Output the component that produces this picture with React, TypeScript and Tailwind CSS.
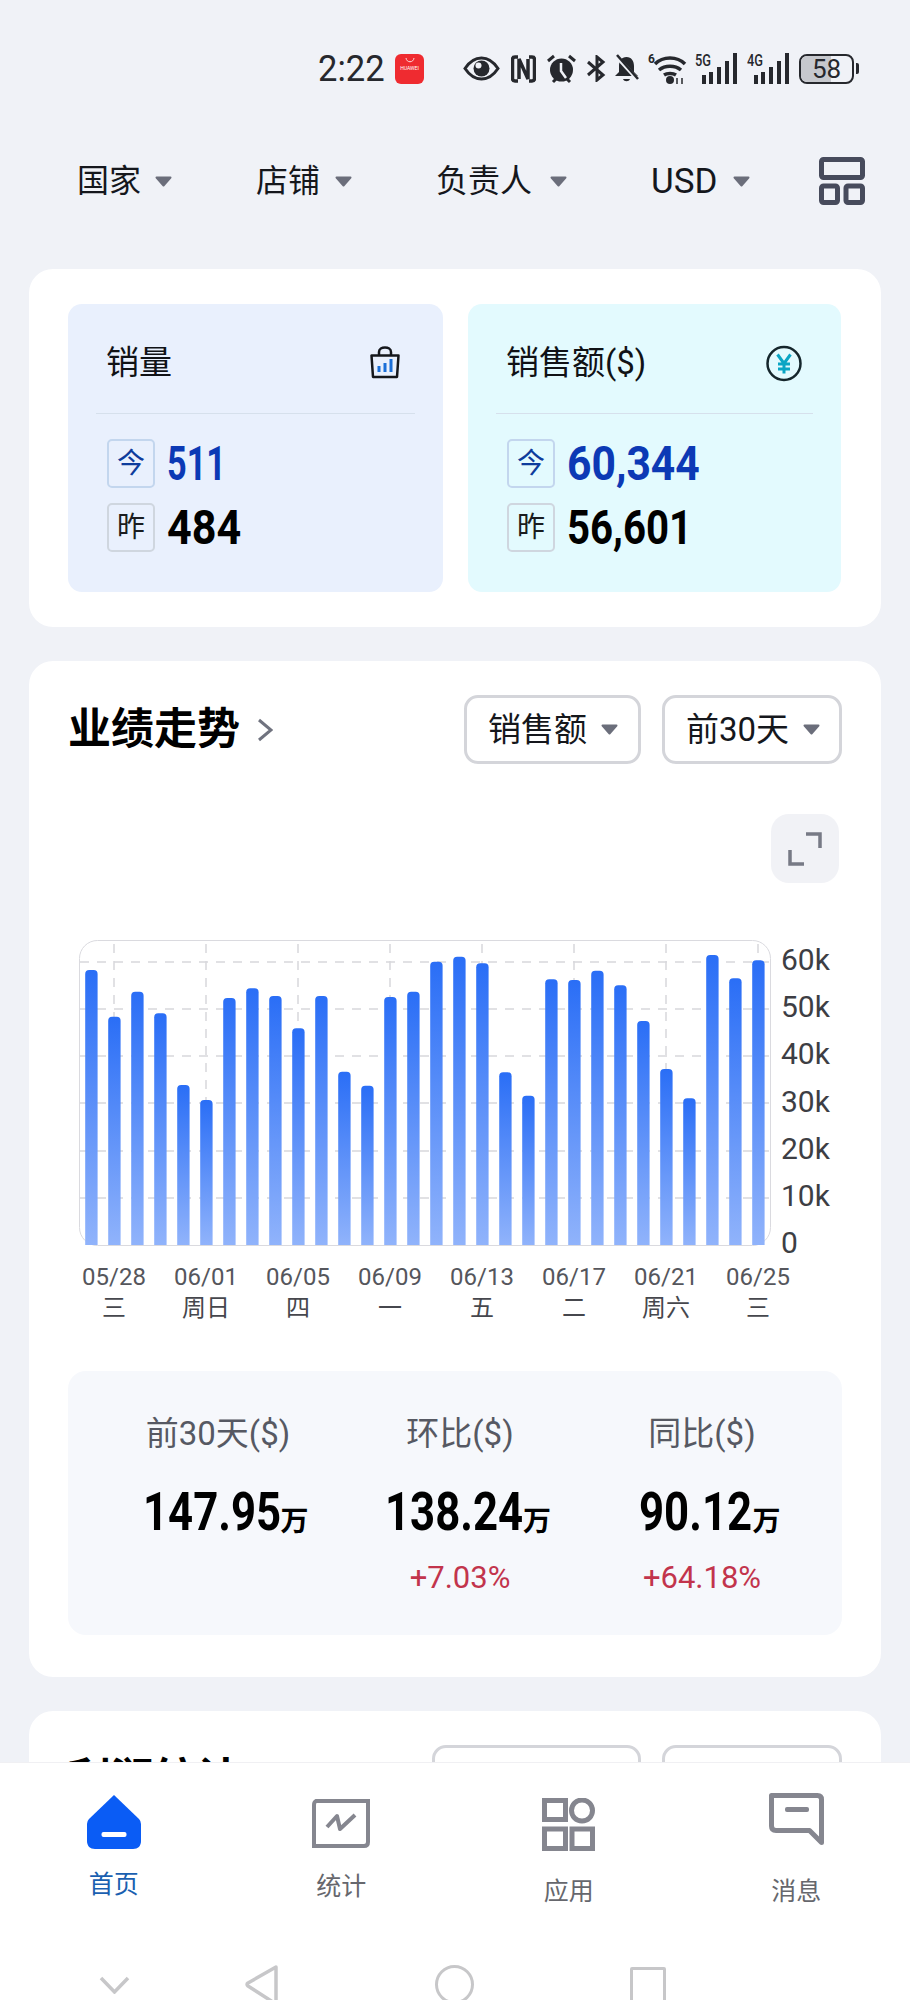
import type { ReactNode } from "react";

const CJK = "font-['Roboto','Noto_Sans_CJK_SC',sans-serif]";

const barTops = [
  150, 290, 215, 280, 495, 540, 234, 205, 228, 325, 228, 455, 497, 231, 215, 125, 110, 130, 457, 527, 178, 180, 152, 196,
  303, 447, 535, 105, 175, 121,
];

const xLabels = [
  ["05/28", "三"],
  ["06/01", "周日"],
  ["06/05", "四"],
  ["06/09", "一"],
  ["06/13", "五"],
  ["06/17", "二"],
  ["06/21", "周六"],
  ["06/25", "三"],
];

function Caret({ className = "" }: { className?: string }) {
  return (
    <svg width="17" height="11" viewBox="0 0 17 11" className={`shrink-0 ${className}`}>
      <path d="M1.500 1.500h14L8.500 9.500z" fill="#6b6e7b" stroke="#6b6e7b" strokeWidth="2" strokeLinejoin="round" />
    </svg>
  );
}

function StatusBar() {
  return (
    <div className="mt-[52px] flex h-[33px] items-center pl-[318px] text-[#26282d]">
      <span className="mr-[9px] w-[68px] origin-left scale-x-[0.96] text-[36px] leading-none">2:22</span>
      <div className="relative mr-[39px] flex h-[30px] w-[29px] flex-col items-center overflow-hidden rounded-[6px] bg-[#ef2b30] pt-[3px]">
        <svg width="10" height="6" viewBox="0 0 10 6">
          <path d="M1 1c.5 5 7.500 5 8 0" fill="none" stroke="#ffd9d9" strokeWidth="1" />
        </svg>
        <span className="mt-[3px] text-[5px] leading-none text-white">HUAWEI</span>
      </div>
      <svg width="37" height="25" viewBox="0 0 37 25" className="mr-[11px]">
        <path d="M2 12.500C7 5 12 2 18.500 2S30 5 35 12.500C30 20 25 23 18.500 23S7 20 2 12.500z" fill="none" stroke="#26282d" strokeWidth="3" />
        <circle cx="18.500" cy="12.500" r="8" fill="#26282d" />
        <circle cx="15.500" cy="9.500" r="3" fill="#f0f2f7" />
      </svg>
      <svg width="25" height="28" viewBox="0 0 25 28" className="mr-[11px]" fill="none">
        <path d="M7 2H4q-2.500 0-2.500 2.500v19Q1.500 26 4 26h3M18 2h3q2.500 0 2.500 2.500v19Q23.500 26 21 26h-3" stroke="#26282d" strokeWidth="3.500" />
        <path d="M8 24V4l9 20V4" stroke="#26282d" strokeWidth="3.500" />
      </svg>
      <svg width="29" height="30" viewBox="0 0 29 30" className="mr-[9px]">
        <circle cx="14.500" cy="16" r="11.500" fill="#26282d" />
        <path d="M1 7l6-5M28 7l-6-5M6 28l3-3M23 28l-3-3" stroke="#26282d" strokeWidth="3" />
        <path d="M14 9v8l5 7" fill="none" stroke="#f0f2f7" strokeWidth="2.500" />
      </svg>
      <svg width="22" height="27" viewBox="0 0 22 27" className="mr-[7px]">
        <path d="M3 7l15 13-6 5V2l6 5L3 20" fill="none" stroke="#26282d" strokeWidth="3" />
      </svg>
      <svg width="25" height="29" viewBox="0 0 25 29" className="mr-[9px]">
        <path d="M12.500 3c5 0 7.500 4 7.500 9v6l4 4H1l4-4v-6c0-5 2.500-9 7.500-9z" fill="#26282d" />
        <path d="M9 25c1 3 6 3 7 0z" fill="#26282d" />
        <path d="M2 2l21 23" stroke="#f0f2f7" strokeWidth="4" />
        <path d="M3 1l21 24" stroke="#26282d" strokeWidth="2.500" />
      </svg>
      <div className="relative mr-[8px] h-[32px] w-[40px]">
        <span className="absolute left-0 top-0 text-[12px] font-bold leading-none">6</span>
        <svg width="40" height="32" viewBox="0 0 40 32" className="absolute inset-0">
          <path d="M7 11c8-8 22-8 30 0M11 17c6-5 16-5 22 0M16 22c3-2 9-2 12 0" fill="none" stroke="#26282d" strokeWidth="3.500" />
          <circle cx="22" cy="27" r="4" fill="#26282d" />
          <path d="M29 25v6M34 25v6" stroke="#26282d" strokeWidth="1.500" />
        </svg>
      </div>
      <Signal label="5G" className="mr-[11px]" />
      <Signal label="4G" className="mr-[10px]" />
      <div className="relative flex h-[30px] w-[55px] items-center justify-center overflow-hidden rounded-[8px] border-[2.5px] border-[#26282d]">
        <div className="absolute inset-y-0 left-0 w-[58%] bg-[#c6c8cd]" />
        <span className="relative text-[26px] leading-none">58</span>
      </div>
      <div className="ml-[2px] h-[11px] w-[3px] rounded-r-[2px] bg-[#26282d]" />
    </div>
  );
}

function Signal({ label, className }: { label: string; className: string }) {
  return (
    <div className={`relative h-[31px] w-[41px] ${className}`}>
      <span className="absolute -left-px top-0 origin-top-left scale-x-[0.8] text-[16px] font-medium leading-none">{label}</span>
      <svg width="41" height="31" viewBox="0 0 41 31" className="absolute inset-0">
        <path d="M8 22v9M15 19v12M23 14v17M31 8v23M39 0v31" stroke="#26282d" strokeWidth="4" />
      </svg>
    </div>
  );
}

function FilterRow() {
  const items = [
    { label: "国家", text: "mr-[14px] text-[32px]" },
    { label: "店铺", text: "mr-[15px] text-[32px]" },
    { label: "负责人", text: "mr-[18px] text-[32px]" },
    { label: "USD", text: "mr-[15px] text-[35px]" },
  ];
  return (
    <div className="mt-[72px] flex h-[48px] items-center pl-[77px] pr-[45px] text-[#15171c]">
      <div className="flex items-center gap-[84px]">
        {items.map((item) => (
          <div key={item.label} className="flex shrink-0 items-center whitespace-nowrap">
            <span className={`leading-none ${item.text}`}>{item.label}</span>
            <Caret />
          </div>
        ))}
      </div>
      <svg width="46" height="48" viewBox="0 0 46 48" className="ml-auto shrink-0" fill="none" stroke="#474b5c" strokeWidth="5">
        <rect x="2.500" y="2.500" width="41" height="18" rx="2" />
        <rect x="2.500" y="29" width="16" height="16.500" rx="2" />
        <rect x="27" y="29" width="16.500" height="16.500" rx="2" />
      </svg>
    </div>
  );
}

function BagIcon() {
  return (
    <svg width="30" height="34" viewBox="0 0 30 34" fill="none">
      <path d="M9 11V7c0-6 12-6 12 0v4" stroke="#15171c" strokeWidth="2.500" />
      <path d="M1.500 10.500h27l-1.500 21.500h-24z" stroke="#15171c" strokeWidth="2.500" strokeLinejoin="round" />
      <path d="M9 21v6M15 18v9M21 14v13" stroke="#1b6fd8" strokeWidth="3" />
    </svg>
  );
}

function YenIcon() {
  return (
    <svg width="36" height="37" viewBox="0 0 36 37" fill="none">
      <circle cx="18" cy="18.500" r="16.500" stroke="#15262c" strokeWidth="2.500" />
      <path d="M11.500 9.500l6.500 9 6.500-9M18 18.500v10M12 19h12M12 24h12" stroke="#0aa5c4" strokeWidth="3" />
    </svg>
  );
}

function Badge({ kind, children }: { kind: "today" | "yesterday"; children: ReactNode }) {
  return (
    <div
      className={`flex h-[49px] w-[48px] shrink-0 items-center justify-center rounded-[5px] border-2 text-[28px] leading-none ${
        kind === "today" ? "border-[#c3d6ee] text-[#0e3c9c]" : "border-[#cfd6df] text-[#1a1c20]"
      }`}
    >
      {children}
    </div>
  );
}

function SummaryCard({
  title,
  icon,
  today,
  yesterday,
  todayScale,
  yesterdayScale,
  bg,
  iconRight,
}: {
  title: string;
  icon: ReactNode;
  today: string;
  yesterday: string;
  todayScale: string;
  yesterdayScale: string;
  bg: string;
  iconRight: string;
}) {
  return (
    <div className={`h-[288px] rounded-[14px] ${bg}`}>
      <div className={`flex h-[109px] items-start justify-between pl-[38px] pt-[37px] ${iconRight}`}>
        <span className="text-[33px] leading-[44px] text-[#101216]">{title}</span>
        <div className="mt-[4px]">{icon}</div>
      </div>
      <div className="mx-[28px] border-t border-[#d6e0ec]" />
      <div className="mt-[25px] flex flex-col gap-[15px] pl-[39px]">
        <div className="flex items-center gap-[12px]">
          <Badge kind="today">今</Badge>
          <span className={`origin-left text-[49px] font-bold leading-none text-[#0c39b5] ${todayScale}`}>{today}</span>
        </div>
        <div className="flex items-center gap-[12px]">
          <Badge kind="yesterday">昨</Badge>
          <span className={`origin-left text-[49px] font-bold leading-none text-black ${yesterdayScale}`}>{yesterday}</span>
        </div>
      </div>
    </div>
  );
}

function SelectButton({ label, widthClass, paddingClass }: { label: string; widthClass: string; paddingClass: string }) {
  return (
    <div className={`flex h-[69px] items-center rounded-[14px] border-[3px] border-[#d4d5da] bg-white ${widthClass} ${paddingClass}`}>
      <span className="mr-[14px] whitespace-nowrap text-[33px] leading-none text-[#15171c]">{label}</span>
      <Caret />
    </div>
  );
}

function BarChart() {
  const plotBottom = 305;
  return (
    <svg width="700" height="310" viewBox="0 0 700 310" className="block">
      <defs>
        <linearGradient id="barFill" x1="0" y1="0" x2="0" y2="1">
          <stop offset="0" stopColor="#2a6ef6" />
          <stop offset="1" stopColor="#90b3fb" />
        </linearGradient>
      </defs>
      <rect x="0.500" y="0.500" width="691" height="305" rx="18" fill="#fff" stroke="#dadadf" />
      {[22, 69, 116, 163, 211, 258].map((y) => (
        <line key={y} x1="1" x2="691" y1={y} y2={y} stroke="#d8d8dc" strokeWidth="1.500" strokeDasharray="9 8" />
      ))}
      {[35, 127, 219, 311, 403, 495, 587, 679].map((x) => (
        <line key={x} x1={x} x2={x} y1="4" y2="305" stroke="#d8d8dc" strokeWidth="1.500" strokeDasharray="9 8" />
      ))}
      {barTops.map((top, i) => {
        const h = (975 - top) / 3;
        const x = 6.2 + 23 * i;
        return (
          <path
            key={i}
            d={`M${x} ${plotBottom}V${plotBottom - h + 4}a4 4 0 0 1 4-4h4.400a4 4 0 0 1 4 4V${plotBottom}z`}
            fill="url(#barFill)"
          />
        );
      })}
    </svg>
  );
}

function StatColumn({ label, value, widthClass, delta }: { label: string; value: string; widthClass: string; delta?: string }) {
  return (
    <div className="flex flex-col items-center">
      <span className="whitespace-nowrap text-[33px] leading-[44px] text-[#565963]">{label}</span>
      <div className="ml-[16px] mt-[29px] flex items-end">
        <span className={`origin-left scale-x-[0.81] text-[54px] font-bold leading-[54px] text-black ${widthClass}`}>{value}</span>
        <span className="mb-[3px] ml-[2px] text-[28px] font-bold leading-none text-black">万</span>
      </div>
      {delta ? <span className="mt-[19px] text-[31px] leading-[40px] text-[#c2344c]">{delta}</span> : null}
    </div>
  );
}

function TrendCard() {
  return (
    <section className="mt-[34px] h-[1016px] rounded-[24px] bg-white px-[39px] pt-[34px]">
      <div className="flex h-[69px] items-center">
        <h2 className="text-[43px] font-bold leading-none text-black">业绩走势</h2>
        <svg width="16" height="24" viewBox="0 0 16 24" className="ml-[17px]" fill="none">
          <path d="M2 2l12 10L2 22" stroke="#70737f" strokeWidth="3" />
        </svg>
        <div className="ml-auto flex gap-[21px]">
          <SelectButton label="销售额" widthClass="w-[177px]" paddingClass="pl-[21px]" />
          <SelectButton label="前30天" widthClass="w-[180px]" paddingClass="pl-[21px]" />
        </div>
      </div>
      <div className="mr-[3px] mt-[50px] flex justify-end">
        <div className="flex h-[69px] w-[68px] items-center justify-center rounded-[18px] bg-[#f1f2f6]">
          <svg width="34" height="34" viewBox="0 0 34 34" fill="none" stroke="#777a85" strokeWidth="3.500">
            <path d="M18 2h14v14M2 18v14h14" />
          </svg>
        </div>
      </div>
      <div className="ml-[11px] mt-[57px] grid grid-cols-[702px_1fr]">
        <BarChart />
        <div className="-mt-[4px] flex flex-col text-[30px] leading-[47.2px] text-[#3d3e44]">
          {["60k", "50k", "40k", "30k", "20k", "10k", "0"].map((t) => (
            <span key={t}>{t}</span>
          ))}
        </div>
      </div>
      <div className="-mt-[6px] grid grid-cols-[repeat(8,92px)] text-center">
        {xLabels.map(([date, day]) => (
          <div key={date} className="flex flex-col items-center">
            <span className="text-[24px] leading-[34px] text-[#55565c]">{date}</span>
            <span className="-mt-[3px] text-[24px] leading-[34px] text-[#46474d]">{day}</span>
          </div>
        ))}
      </div>
      <div className="mt-[46px] grid h-[264px] grid-cols-[repeat(3,242px)] rounded-[18px] bg-[#f6f8fc] pl-[29px] pt-[41px]">
        <StatColumn label="前30天($)" value="147.95" widthClass="w-[135px]" />
        <StatColumn label="环比($)" value="138.24" widthClass="w-[136px]" delta="+7.03%" />
        <StatColumn label="同比($)" value="90.12" widthClass="w-[111px]" delta="+64.18%" />
      </div>
    </section>
  );
}

function ProfitCard() {
  return (
    <section className="mt-[34px] h-[400px] rounded-[24px] bg-white px-[39px] pt-[34px]">
      <div className="flex h-[69px] items-center">
        <h2 className="text-[43px] font-bold leading-none text-black">利润统计</h2>
        <div className="ml-auto flex gap-[21px]">
          <div className="h-[69px] w-[209px] rounded-[14px] border-[3px] border-[#d4d5da] bg-white" />
          <div className="h-[69px] w-[180px] rounded-[14px] border-[3px] border-[#d4d5da] bg-white" />
        </div>
      </div>
    </section>
  );
}

function HomeIcon() {
  return (
    <svg width="54" height="54" viewBox="0 0 54 54">
      <path d="M27 0L52 24q2 2 2 5v17c0 5-3 8-8 8H8c-5 0-8-3-8-8V29q0-3 2-5z" fill="#0a5cf5" />
      <rect x="14.500" y="37" width="25" height="5" rx="2" fill="#fff" />
    </svg>
  );
}

function StatsIcon() {
  return (
    <svg width="58" height="50" viewBox="0 0 58 50" fill="none" stroke="#85868f">
      <path d="M4 2h52v41q0 4-4 4H2V6q0-3 2-4z" strokeWidth="4" />
      <path d="M15 28l10-11 3 13 15-14" strokeWidth="4" strokeLinejoin="round" />
    </svg>
  );
}

function AppsIcon() {
  return (
    <svg width="53" height="53" viewBox="0 0 53 53" fill="none" stroke="#85868f" strokeWidth="5">
      <rect x="2.500" y="2.500" width="21" height="19" />
      <circle cx="40" cy="12.500" r="10.500" />
      <rect x="2.500" y="31" width="21" height="19.500" />
      <rect x="30" y="31" width="20.500" height="19.500" />
    </svg>
  );
}

function MessageIcon() {
  return (
    <svg width="55" height="53" viewBox="0 0 55 53" fill="none">
      <path d="M2.500 2.500h46q4 0 4 4v43l-12-12H7q-4.500 0-4.500-4.500z" stroke="#85868f" strokeWidth="5" strokeLinejoin="round" />
      <rect x="16" y="14" width="24" height="5" rx="2" fill="#85868f" />
    </svg>
  );
}

function TabBar() {
  const tabs = [
    { label: "首页", icon: <HomeIcon />, box: "pt-[32px]", gap: "mt-[19px]", text: "text-[#1a5fb0]" },
    { label: "统计", icon: <StatsIcon />, box: "pt-[36px]", gap: "mt-[21px]", text: "text-[#66676d]" },
    { label: "应用", icon: <AppsIcon />, box: "pt-[35px]", gap: "mt-[24px]", text: "text-[#66676d]" },
    { label: "消息", icon: <MessageIcon />, box: "pt-[30px]", gap: "mt-[29px]", text: "text-[#66676d]" },
  ];
  return (
    <nav className="flex-1 border-t border-[#f0f0f3] bg-white">
      <div className="grid h-[202px] grid-cols-4">
        {tabs.map((tab) => (
          <div key={tab.label} className={`flex flex-col items-center ${tab.box}`}>
            {tab.icon}
            <span className={`text-[25px] leading-[34px] ${tab.gap} ${tab.text}`}>{tab.label}</span>
          </div>
        ))}
      </div>
      <div className="flex items-start pl-[99px]">
        <svg width="31" height="18" viewBox="0 0 31 18" className="mt-[11px]" fill="none">
          <path d="M2 2l13.500 14L29 2" stroke="#c7c7c9" strokeWidth="3.500" />
        </svg>
        <svg width="33" height="40" viewBox="0 0 33 40" className="ml-[115px]" fill="none">
          <path d="M31 2L3 18q-2 1.500 0 3l28 18z" stroke="#c7c7c9" strokeWidth="3.500" strokeLinejoin="round" />
        </svg>
        <div className="ml-[157px] h-[39px] w-[39px] rounded-full border-[3.5px] border-[#c7c7c9]" />
        <div className="ml-[156px] mt-[2px] h-[40px] w-[36px] rounded-[2px] border-[3.5px] border-[#c7c7c9]" />
      </div>
    </nav>
  );
}

export default function App() {
  return (
    <div className={`flex h-[2000px] w-[910px] flex-col overflow-hidden bg-[#f0f2f7] ${CJK}`}>
      <div className="h-[1762px] shrink-0 overflow-hidden">
        <StatusBar />
        <FilterRow />
        <div className="mt-[64px] px-[29px]">
          <section className="h-[358px] rounded-[24px] bg-white px-[39px] pt-[35px]">
            <div className="grid grid-cols-[375px_373px] gap-[25px]">
              <SummaryCard
                title="销量"
                icon={<BagIcon />}
                today="511"
                yesterday="484"
                todayScale="scale-x-[0.7]"
                yesterdayScale="scale-x-[0.88]"
                bg="bg-[#e9f0fd]"
                iconRight="pr-[43px]"
              />
              <SummaryCard
                title="销售额($)"
                icon={<YenIcon />}
                today="60,344"
                yesterday="56,601"
                todayScale="scale-x-[0.87]"
                yesterdayScale="scale-x-[0.82]"
                bg="bg-[#e3fafe]"
                iconRight="pr-[39px]"
              />
            </div>
          </section>
          <TrendCard />
          <ProfitCard />
        </div>
      </div>
      <TabBar />
    </div>
  );
}
